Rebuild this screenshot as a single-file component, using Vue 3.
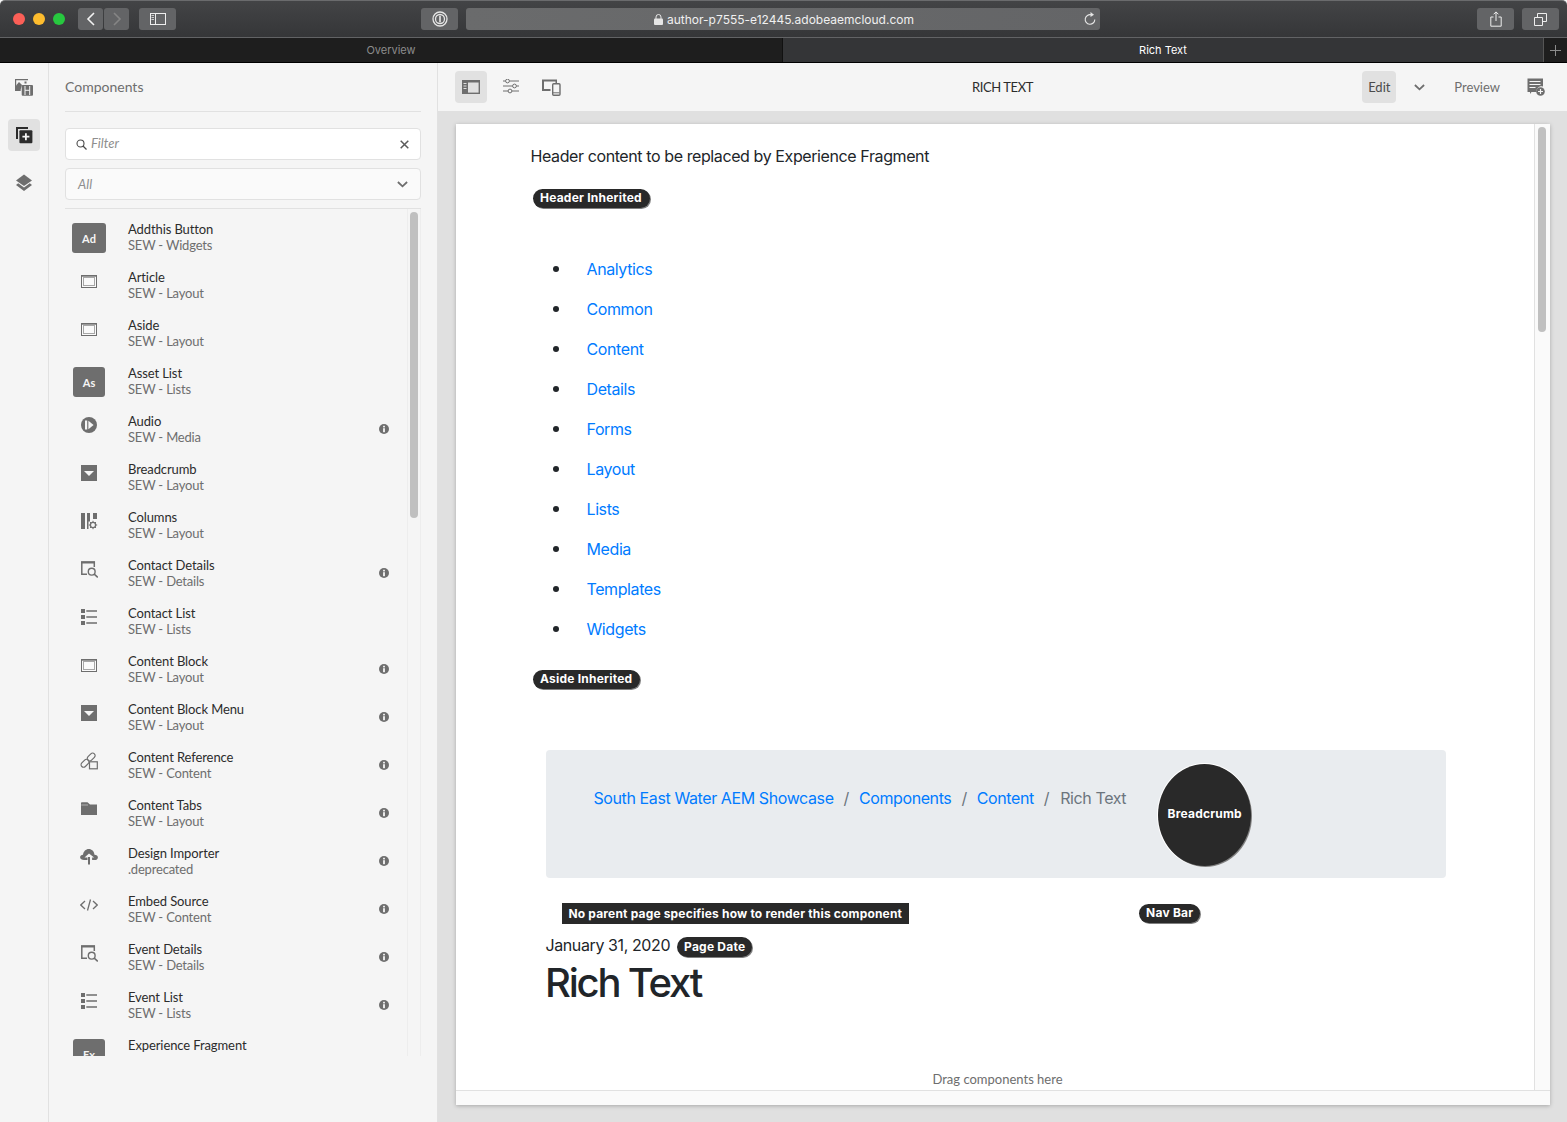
<script setup>
const links = ['Analytics', 'Common', 'Content', 'Details', 'Forms', 'Layout', 'Lists', 'Media', 'Templates', 'Widgets']

const components = [
  { name: 'Addthis Button', group: 'SEW - Widgets', tile: 'Ad', wide: true },
  { name: 'Article', group: 'SEW - Layout', icon: 'layout' },
  { name: 'Aside', group: 'SEW - Layout', icon: 'layout' },
  { name: 'Asset List', group: 'SEW - Lists', tile: 'As' },
  { name: 'Audio', group: 'SEW - Media', icon: 'audio', info: true },
  { name: 'Breadcrumb', group: 'SEW - Layout', icon: 'dropdown' },
  { name: 'Columns', group: 'SEW - Layout', icon: 'columns' },
  { name: 'Contact Details', group: 'SEW - Details', icon: 'details', info: true },
  { name: 'Contact List', group: 'SEW - Lists', icon: 'list' },
  { name: 'Content Block', group: 'SEW - Layout', icon: 'layout', info: true },
  { name: 'Content Block Menu', group: 'SEW - Layout', icon: 'dropdown', info: true },
  { name: 'Content Reference', group: 'SEW - Content', icon: 'reference', info: true },
  { name: 'Content Tabs', group: 'SEW - Layout', icon: 'folder', info: true },
  { name: 'Design Importer', group: '.deprecated', icon: 'cloud', info: true },
  { name: 'Embed Source', group: 'SEW - Content', icon: 'code', info: true },
  { name: 'Event Details', group: 'SEW - Details', icon: 'details', info: true },
  { name: 'Event List', group: 'SEW - Lists', icon: 'list', info: true },
  { name: 'Experience Fragment', group: 'SEW - Content', tile: 'Ex' },
]
</script>

<template>
  <div class="window">
    <svg class="defs" aria-hidden="true">
      <symbol id="i-layout" viewBox="0 0 18 18">
        <rect x="1.500" y="3.500" width="15" height="12" fill="#fafafa" stroke="#6e6e6e" />
        <path d="M2 4h14v1H2z" fill="#9a9a9a" />
        <rect x="3.500" y="5.500" width="11" height="8" fill="none" stroke="#555" stroke-dasharray="1 1" />
      </symbol>
      <symbol id="i-audio" viewBox="0 0 18 18">
        <circle cx="9" cy="9" r="8" fill="#6e6e6e" />
        <rect x="5" y="4.500" width="2.200" height="9" fill="#f5f5f5" />
        <path d="M8.400 4.800 13.600 9l-5.200 4.200z" fill="#f5f5f5" />
      </symbol>
      <symbol id="i-dropdown" viewBox="0 0 18 18">
        <rect x="1" y="1" width="16" height="16" fill="#6e6e6e" />
        <path d="M4 7h10l-5 5z" fill="#f5f5f5" />
      </symbol>
      <symbol id="i-columns" viewBox="0 0 18 18">
        <path d="M1 1h4v16H1zM7 1h3v8.500H8.500V17H7zM13 1h4v6h-4z" fill="#6e6e6e" />
        <circle cx="13" cy="13" r="2.600" fill="none" stroke="#6e6e6e" stroke-width="1.300" />
        <path d="M13 8.800v1.600M13 15.600v1.600M8.800 13h1.600M15.600 13h1.600M10 10l1 1M15 15l1 1M16 10l-1 1M11 15l-1 1" stroke="#6e6e6e" />
      </symbol>
      <symbol id="i-details" viewBox="0 0 18 18">
        <path d="M7 14.300H1.800V2h12.500v5" fill="none" stroke="#6e6e6e" stroke-width="1.500" />
        <path d="M1 1.500h14v2H1z" fill="#6e6e6e" />
        <circle cx="11.700" cy="11.700" r="3.400" fill="none" stroke="#6e6e6e" stroke-width="1.400" />
        <path d="m14.200 14.200 3.600 3.200" stroke="#6e6e6e" stroke-width="1.600" />
      </symbol>
      <symbol id="i-list" viewBox="0 0 18 18">
        <path d="M1 1h4v4H1zM1 7h4v4H1zM1 13h4v4H1z" fill="#6e6e6e" />
        <path d="M6.300 3H17M6.300 9H17M6.300 15H17" stroke="#6e6e6e" stroke-width="1.400" />
      </symbol>
      <symbol id="i-reference" viewBox="0 0 18 18">
        <rect x="-4.500" y="-2.500" width="9" height="5" rx="2.500" transform="translate(5 11.300) rotate(-45)" fill="none" stroke="#6e6e6e" stroke-width="1.200" />
        <rect x="-4.500" y="-2.500" width="9" height="5" rx="2.500" transform="translate(11.200 5) rotate(-45)" fill="none" stroke="#6e6e6e" stroke-width="1.200" />
        <rect x="9.500" y="9.800" width="7.800" height="7" fill="#f5f5f5" stroke="#6e6e6e" stroke-width="1.200" />
      </symbol>
      <symbol id="i-folder" viewBox="0 0 18 18">
        <path d="M1 3.200C1 2.500 1.500 2.300 2 2.300h5.500L10 4.500h7V15H1z" fill="#6e6e6e" />
        <path d="M1.300 5h6.700" stroke="#f5f5f5" stroke-width=".5" />
      </symbol>
      <symbol id="i-cloud" viewBox="0 0 18 18">
        <path d="M4 12C2 12 .100 11 .100 9.300.100 7.800 1.400 6.800 3 6.800 3.500 3.200 5.800 1 8.800 1c3 0 5.200 2.200 5.700 5.700 2 .100 3.400 1.100 3.400 2.700 0 1.600-1.500 2.600-3.300 2.600h-2.500V9.500h2L9 5.500 4.500 9.500h3V12z" fill="#6e6e6e" />
        <rect x="8" y="9" width="2" height="7.500" fill="#6e6e6e" />
      </symbol>
      <symbol id="i-code" viewBox="0 0 18 18">
        <path d="M5 5 .8 9 5 13M13 5l4.200 4L13 13M10.500 3.500 7.500 14.500" fill="none" stroke="#6e6e6e" stroke-width="1.300" />
      </symbol>
    </svg>

    <header class="titlebar">
      <div class="lights">
        <span class="light red"></span>
        <span class="light yellow"></span>
        <span class="light green"></span>
      </div>
      <div class="nav-pair">
        <button class="chrome-btn nav">
          <svg width="12" height="16" viewBox="0 0 12 16"><path d="M9 2 3 8l6 6" fill="none" stroke="#f2f2f2" stroke-width="1.600" /></svg>
        </button>
        <button class="chrome-btn nav">
          <svg width="12" height="16" viewBox="0 0 12 16"><path d="m3 2 6 6-6 6" fill="none" stroke="#858585" stroke-width="1.600" /></svg>
        </button>
      </div>
      <button class="chrome-btn sidebar-btn">
        <svg width="16" height="12" viewBox="0 0 16 12">
          <rect x=".5" y=".5" width="15" height="11" fill="none" stroke="#eee" />
          <path d="M5.500 0v12" stroke="#eee" />
          <path d="M1.500 2.500h2.500M1.500 4.500h2.500M1.500 6.500h2.500" stroke="#ccc" />
        </svg>
      </button>
      <button class="chrome-btn pass-btn">
        <svg width="16" height="16" viewBox="0 0 16 16">
          <circle cx="8" cy="8" r="7" fill="none" stroke="#e6e6e6" stroke-width="1.300" />
          <circle cx="8" cy="8" r="4.500" fill="none" stroke="#e6e6e6" stroke-width="1.300" />
          <rect x="7.200" y="4.800" width="1.600" height="6.400" fill="#e6e6e6" />
        </svg>
      </button>
      <div class="urlbar">
        <span class="url">
          <svg width="9" height="11" viewBox="0 0 9 11">
            <rect x="0" y="4.500" width="9" height="6.500" rx="1" fill="#e6e6e6" />
            <path d="M2 5V3a2.500 2.500 0 0 1 5 0v2" fill="none" stroke="#e6e6e6" />
          </svg>
          author-p7555-e12445.adobeaemcloud.com
        </span>
        <svg class="reload" width="12" height="14" viewBox="0 0 12 14">
          <path d="M7.200 2.800A4.800 4.800 0 1 0 10.800 7.500" fill="none" stroke="#e6e6e6" stroke-width="1.100" />
          <path d="M6.500 0 10 2.800 6.500 5z" fill="#e6e6e6" />
        </svg>
      </div>
      <button class="chrome-btn right-btn">
        <svg width="12" height="16" viewBox="0 0 12 16">
          <path d="M3.500 6H.8v9.200h10.400V6H8.500M6 10V1M3.600 3.300 6 .9l2.400 2.400" fill="none" stroke="#eee" />
        </svg>
      </button>
      <button class="chrome-btn right-btn">
        <svg width="13" height="13" viewBox="0 0 13 13">
          <path d="M.5 4.500h8v8h-8zM3.500 4.500v-4h9v8h-4" fill="none" stroke="#eee" />
        </svg>
      </button>
    </header>

    <div class="tabbar">
      <div class="tab">Overview</div>
      <div class="tab current">Rich Text</div>
      <div class="tab-add">
        <svg width="11" height="11" viewBox="0 0 11 11"><path d="M5.500 0v11M0 5.500h11" stroke="#8c8c8c" /></svg>
      </div>
    </div>

    <div class="editor">
      <nav class="rail">
        <button class="rail-btn">
          <svg width="18" height="18" viewBox="0 0 18 18">
            <path d="M0 1h13v1.200H1.200v9.600h4.500V13H0z" fill="#6e6e6e" />
            <path d="M1 12 1 7.500 4 4l3 3-1.500 5z" fill="#6e6e6e" />
            <rect x="9.500" y="3.500" width="2" height="2" fill="#6e6e6e" />
            <rect x="6.700" y="7" width="11.300" height="10.700" rx="1" fill="#6e6e6e" />
            <path d="M10 8v9M14.700 8v9M10 12.300h4.700" stroke="#f5f5f5" />
          </svg>
        </button>
        <button class="rail-btn active">
          <svg width="18" height="18" viewBox="0 0 18 18">
            <path d="M1 1h12v2H3v10H1z" fill="#2c2c2c" />
            <rect x="4.400" y="4.200" width="13" height="13" rx="1" fill="#2c2c2c" />
            <path d="M10.900 7.200v7M7.400 10.700h7" stroke="#f5f5f5" stroke-width="1.800" />
          </svg>
        </button>
        <button class="rail-btn">
          <svg width="18" height="18" viewBox="0 0 18 18">
            <path d="M9 .5 17 6.500 9 12 1 6.500z" fill="#6e6e6e" />
            <path d="M3.200 9.200 1 11l8 6 8-6-2.200-1.800L9 13.500z" fill="#6e6e6e" />
          </svg>
        </button>
      </nav>

      <aside class="panel">
        <h2 class="panel-title">Components</h2>
        <div class="filter">
          <svg width="11" height="11" viewBox="0 0 11 11">
            <circle cx="4.500" cy="4.500" r="3.500" fill="none" stroke="#4b4b4b" stroke-width="1.100" />
            <path d="m7 7 3.500 3.500" stroke="#4b4b4b" stroke-width="1.200" />
          </svg>
          <span class="filter-text">Filter</span>
          <svg class="clear" width="9" height="9" viewBox="0 0 9 9"><path d="m.7.700 7.600 7.600M8.300.700.700 8.300" stroke="#5a5a5a" stroke-width="1.500" /></svg>
        </div>
        <div class="select">
          <span class="select-text">All</span>
          <svg width="11" height="7" viewBox="0 0 11 7"><path d="m.9 1 4.600 4.300L10.100 1" fill="none" stroke="#6e6e6e" stroke-width="1.800" /></svg>
        </div>
        <div class="list-wrap">
          <ul class="list">
            <li v-for="item in components" :key="item.name" class="item">
              <div class="item-icon">
                <span v-if="item.tile" :class="['tile', { wide: item.wide }]">{{ item.tile }}</span>
                <svg v-else class="glyph" width="18" height="18"><use :href="'#i-' + item.icon" /></svg>
              </div>
              <div class="item-text">
                <div class="item-name">{{ item.name }}</div>
                <div class="item-group">{{ item.group }}</div>
              </div>
              <svg v-if="item.info" class="info" width="10" height="10" viewBox="0 0 10 10">
                <circle cx="5" cy="5" r="5" fill="#6e6e6e" />
                <rect x="4.100" y="1.800" width="1.800" height="1.600" fill="#f5f5f5" />
                <rect x="4.100" y="4.200" width="1.800" height="4" fill="#f5f5f5" />
              </svg>
            </li>
          </ul>
          <div class="list-scroll"><span class="list-thumb"></span></div>
        </div>
      </aside>

      <main class="main">
        <div class="toolbar">
          <div class="tools">
            <button class="tool active">
              <svg width="18" height="14" viewBox="0 0 18 14">
                <rect x=".7" y=".7" width="16.600" height="12.600" fill="none" stroke="#6e6e6e" stroke-width="1.400" />
                <rect x="0" y="0" width="18" height="2.500" fill="#6e6e6e" />
                <rect x="0" y="0" width="6" height="14" fill="#6e6e6e" />
                <path d="M1.500 3.500h3M1.500 6h3M1.500 8.500h3" stroke="#e1e1e1" />
              </svg>
            </button>
            <button class="tool">
              <svg width="16" height="16" viewBox="0 0 16 16">
                <path d="M0 2h2.500M6.500 2H16M0 7h9.500M13.500 7H16M0 12h5M9 12h7" stroke="#6e6e6e" />
                <circle cx="4.500" cy="2" r="1.900" fill="none" stroke="#6e6e6e" />
                <circle cx="11.500" cy="7" r="1.900" fill="none" stroke="#6e6e6e" />
                <circle cx="7" cy="12" r="1.900" fill="none" stroke="#6e6e6e" />
              </svg>
            </button>
            <button class="tool">
              <svg width="20" height="18" viewBox="0 0 20 18">
                <path d="M1 1.500h15V5h-1.500V3.500H3v7.500h6.500v2H1z" fill="#6e6e6e" />
                <rect x="11.700" y="5.700" width="7.300" height="11.600" rx="1" fill="#f5f5f5" stroke="#6e6e6e" stroke-width="1.400" />
                <path d="M12 14.800h6.500" stroke="#6e6e6e" />
              </svg>
            </button>
          </div>
          <div class="doc-title">RICH TEXT</div>
          <div class="modes">
            <button class="mode active">Edit</button>
            <svg class="mode-chevron" width="11" height="7" viewBox="0 0 11 7"><path d="m.9 1 4.600 4.300L10.100 1" fill="none" stroke="#6e6e6e" stroke-width="1.800" /></svg>
            <button class="mode preview">Preview</button>
            <svg class="annotate" width="18" height="18" viewBox="0 0 18 18">
              <path d="M.5.500h15.500v8a5 5 0 0 0-6.500 5.500H4.500L3 16v-2H.5z" fill="#6e6e6e" />
              <path d="M2.500 3.500h11M2.500 6.500h11M2.500 9.500h6" stroke="#f5f5f5" stroke-width="1.200" />
              <circle cx="13.500" cy="13.500" r="4.300" fill="#6e6e6e" />
              <path d="M13.500 11v5M11 13.500h5" stroke="#f5f5f5" stroke-width="1.200" />
            </svg>
          </div>
        </div>

        <div class="canvas">
          <div class="page">
            <div class="page-body">
              <div class="page-content">
                <p class="header-note">Header content to be replaced by Experience Fragment</p>
                <span class="badge header-badge">Header Inherited</span>
                <ul class="links">
                  <li v-for="link in links" :key="link"><a>{{ link }}</a></li>
                </ul>
                <span class="badge aside-badge">Aside Inherited</span>
                <div class="breadcrumb">
                  <div class="crumbs">
                    <a>South East Water AEM Showcase</a><i>/</i>
                    <a>Components</a><i>/</i>
                    <a>Content</a><i>/</i>
                    <span class="crumb-current">Rich Text</span>
                  </div>
                  <div class="crumb-bubble">Breadcrumb</div>
                </div>
                <div class="notice-row">
                  <span class="notice">No parent page specifies how to render this component</span>
                  <span class="badge nav-badge">Nav Bar</span>
                </div>
                <div class="date-row">
                  <span class="date">January 31, 2020</span>
                  <span class="badge date-badge">Page Date</span>
                </div>
                <h1 class="page-title">Rich Text</h1>
                <div class="drop">Drag components here</div>
              </div>
              <div class="page-scroll"><span class="page-thumb"></span></div>
            </div>
            <div class="page-foot"></div>
          </div>
        </div>
      </main>
    </div>
  </div>
</template>

<style>
html, body { margin: 0; background: #f5f5f5; overflow: hidden; }
</style>

<style scoped>
* { box-sizing: border-box; }
button { border: 0; padding: 0; background: none; font: inherit; }
ul { list-style: none; margin: 0; padding: 0; }
.defs { display: none; }
.window { width: 1567px; height: 1122px; display: flex; flex-direction: column; overflow: hidden; font-family: Lato, sans-serif; }

.titlebar { height: 38px; flex-shrink: 0; display: flex; align-items: center; padding: 0 8px 0 13px; background: linear-gradient(#434446, #353638); border-top: 1px solid #6a6b6d; border-bottom: 1px solid #626365; border-radius: 5px 5px 0 0; font-family: Inter, sans-serif; }
.lights { display: flex; gap: 8px; }
.light { width: 12px; height: 12px; border-radius: 50%; }
.red { background: #fb5f57; }
.yellow { background: #fdbc2e; }
.green { background: #27c83f; }
.nav-pair { display: flex; gap: 1px; margin-left: 13px; }
.chrome-btn { height: 22px; border-radius: 3px; background: #636466; display: flex; align-items: center; justify-content: center; }
.nav { width: 25px; }
.sidebar-btn { width: 37px; margin-left: 10px; }
.pass-btn { width: 37px; margin-left: 245px; }
.urlbar { width: 634px; height: 22px; margin-left: 8px; margin-right: 377px; border-radius: 3px; background: linear-gradient(90deg, #6a6b6c, #646567); display: flex; align-items: center; justify-content: center; position: relative; color: #f0f0f0; font-size: 12px; }
.url { display: flex; align-items: center; gap: 4px; margin-left: 2px; }
.reload { position: absolute; right: 4px; top: 4px; }
.right-btn { width: 37px; }
.right-btn + .right-btn { margin-left: 8px; }

.tabbar { height: 25px; flex-shrink: 0; display: flex; background: #1e1e1e; border-bottom: 1px solid #000; font-family: Inter, sans-serif; font-size: 11px; line-height: 24px; }
.tab { width: 782px; text-align: center; color: #8c8c8c; }
.tab.current { width: 761px; background: #343537; color: #fff; border-left: 1px solid #111; }
.tab-add { flex: 1; display: flex; align-items: center; justify-content: center; border-left: 1px solid #555; }

.editor { flex: 1; display: flex; min-height: 0; background: #f5f5f5; }
.rail { width: 49px; flex-shrink: 0; border-right: 1px solid #e1e1e1; padding-top: 8px; display: flex; flex-direction: column; align-items: center; gap: 16px; }
.rail-btn { width: 32px; height: 32px; border-radius: 4px; display: flex; align-items: center; justify-content: center; }
.rail-btn.active { background: #e1e1e1; }

.panel { width: 389px; flex-shrink: 0; border-right: 1px solid #e1e1e1; padding: 0 16px; display: flex; flex-direction: column; }
.panel-title { margin: 0 0 16px; height: 49px; border-bottom: 1px solid #e1e1e1; font-size: 14px; font-weight: 400; line-height: 48px; color: #6e6e6e; }
.filter { height: 32px; display: flex; align-items: center; padding: 0 11px 0 10px; background: #fff; border: 1px solid #e1e1e1; border-radius: 4px; }
.filter-text { margin: -2px 0 0 4px; flex: 1; font-style: italic; font-size: 13px; color: #8e8e8e; }
.select { height: 32px; margin-top: 8px; display: flex; align-items: center; justify-content: space-between; padding: 0 12px; background: #fafafa; border: 1px solid #e1e1e1; border-radius: 4px; }
.select-text { font-style: italic; font-size: 13px; color: #8e8e8e; }
.list-wrap { height: 848px; margin-top: 8px; border-top: 1px solid #e1e1e1; display: flex; overflow: hidden; }
.list { flex: 1; padding-top: 4px; overflow: hidden; }
.item { height: 48px; display: flex; align-items: center; padding-right: 18px; }
.item-icon { width: 48px; height: 30px; margin-top: 2px; flex-shrink: 0; display: flex; align-items: center; justify-content: center; }
.glyph { margin-bottom: 10px; }
.tile { width: 32px; height: 30px; border-radius: 3px; background: #6e6e6e; color: #f5f5f5; font-size: 11px; font-weight: 700; display: flex; align-items: center; justify-content: center; }
.tile.wide { width: 34px; }
.item-text { flex: 1; margin-left: 15px; font-size: 13px; line-height: 16px; }
.item-name { color: #2c2c2c; letter-spacing: -.1px; }
.item-group { color: #6e6e6e; letter-spacing: -.2px; }
.list-scroll { width: 14px; flex-shrink: 0; padding: 3px 2px 0; border-left: 1px solid #ededed; border-right: 1px solid #ededed; }
.list-thumb { display: block; width: 8px; height: 306px; border-radius: 4px; background: #c0c0c0; }

.main { flex: 1; min-width: 0; display: flex; flex-direction: column; }
.toolbar { height: 48px; flex-shrink: 0; display: grid; grid-template-columns: 1fr auto 1fr; align-items: center; padding: 0 17px; }
.tools { display: flex; gap: 8px; }
.tool { width: 32px; height: 32px; border-radius: 4px; display: flex; align-items: center; justify-content: center; }
.tool.active { background: #e1e1e1; }
.doc-title { font-size: 13px; letter-spacing: -.4px; color: #2c2c2c; }
.modes { display: flex; align-items: center; justify-content: flex-end; }
.mode { font-family: Lato, sans-serif; font-size: 13px; color: #6e6e6e; }
.mode.active { width: 34px; height: 32px; border-radius: 4px; background: #e1e1e1; color: #4b4b4b; }
.mode-chevron { margin-left: 18px; }
.mode.preview { margin-left: 29px; }
.annotate { margin-left: 27px; margin-right: 5px; }

.canvas { flex: 1; min-height: 0; background: #e0e0e0; padding: 13px 17px 0 18px; }
.page { height: 981px; display: flex; flex-direction: column; background: #fafafa; box-shadow: 0 1px 4px rgba(0, 0, 0, .25); font-family: Inter, sans-serif; }
.page-body { height: 967px; display: flex; background: #fff; border-bottom: 1px solid #e1e1e1; }
.page-content { flex: 1; min-width: 0; padding: 20px 90px 0 74.500px; position: relative; border-right: 1px solid #e1e1e1; color: #212529; letter-spacing: -.4px; }
.page-scroll { width: 15px; flex-shrink: 0; padding: 3px 3px 0 3px; background: #fafafa; }
.page-thumb { display: block; width: 8px; height: 205px; border-radius: 4px; background: #c0c0c0; }
.page-foot { flex: 1; }

.header-note { margin: 0; font-size: 16px; line-height: 24px; }
.badge { display: inline-block; height: 19px; padding: 0 7px; border-radius: 10px; background: #292929; color: #fff; font-size: 12px; font-weight: 700; line-height: 18px; letter-spacing: .22px; white-space: nowrap; box-shadow: 1px 1px 0 #808080; }
.header-badge { display: block; width: 117px; margin: 21px 0 0 2.500px; }
.links { margin: 49px 0 0; font-size: 16px; line-height: 24px; }
.links li { height: 40px; display: flex; align-items: flex-start; }
.links li::before { content: ''; width: 6px; height: 6px; margin: 9px 28px 0 22px; border-radius: 50%; background: #212529; }
.links a { color: #007bff; }
.aside-badge { display: block; width: 107px; margin: 13px 0 0 2.500px; }
.breadcrumb { width: 900px; height: 128px; margin: 61px 0 0 15.500px; padding: 14px 47.500px 0; background: #e9ecef; border-radius: 4px; display: flex; align-items: flex-start; }
.crumbs { display: flex; margin-top: 22px; font-size: 16px; line-height: 24px; color: #6c757d; white-space: nowrap; }
.crumbs a { color: #007bff; }
.crumbs i { font-style: normal; padding: 0 10px; }
.crumb-current { margin-left: 1px; }
.crumb-bubble { width: 93px; height: 102px; margin-left: 32px; padding-bottom: 4px; border-radius: 50%; background: #292929; color: #fff; font-size: 12px; font-weight: 700; letter-spacing: .2px; display: flex; align-items: center; justify-content: center; box-shadow: 1px 1px 0 #808080, 0 0 0 1px #fff; }
.notice-row { display: flex; align-items: center; margin: 25px 0 0 31.500px; }
.notice { height: 21px; padding: 0 7px 0 6.500px; background: #292929; color: #fff; font-size: 12px; font-weight: 700; line-height: 21px; letter-spacing: .17px; }
.nav-badge { margin-left: 230px; }
.date-row { display: flex; align-items: flex-end; margin: 9px 0 0 15px; }
.date { font-size: 16px; line-height: 24px; }
.date-badge { margin-left: 7px; height: 20px; line-height: 19px; }
.page-title { margin: 2px 0 0 14.500px; font-size: 40px; font-weight: 500; line-height: 48px; letter-spacing: -2.200px; }
.drop { position: absolute; left: 0; right: 0; bottom: 2px; padding-left: 5px; text-align: center; font-family: Lato, sans-serif; font-size: 13px; line-height: 18px; letter-spacing: 0; color: #6e6e6e; }
</style>
